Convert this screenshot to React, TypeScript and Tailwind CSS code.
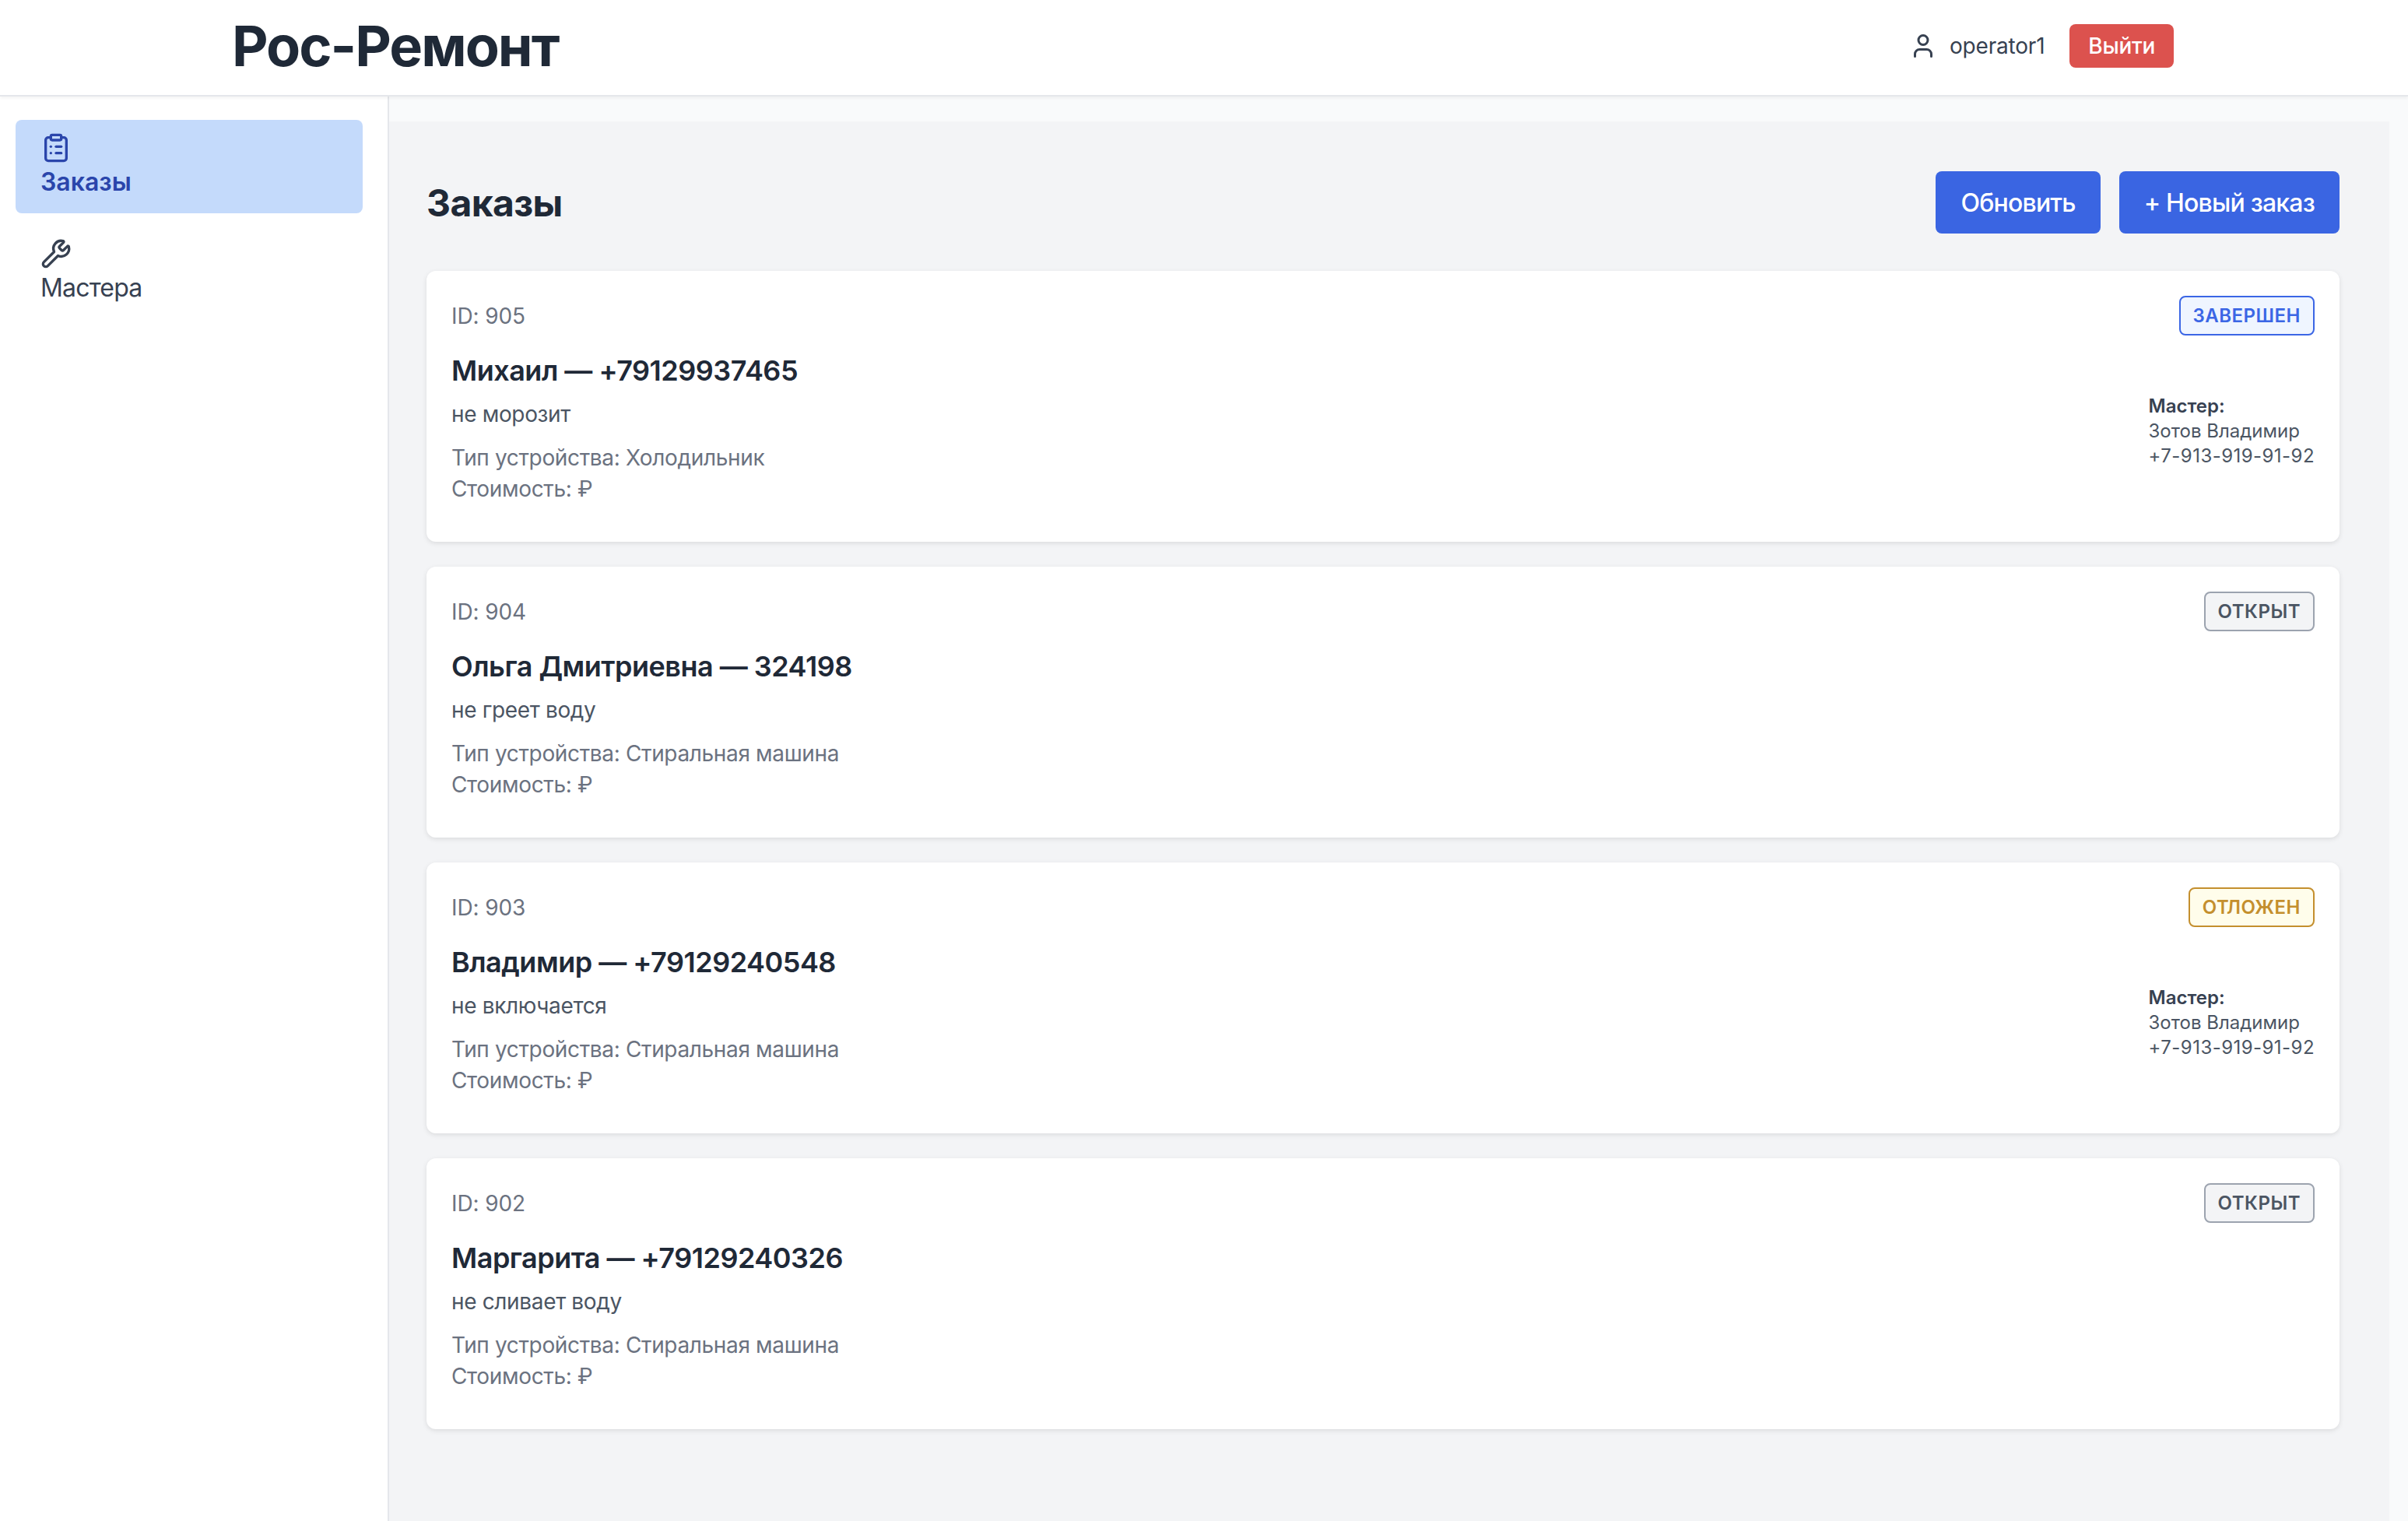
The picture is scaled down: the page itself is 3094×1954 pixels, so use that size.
import { ClipboardList, User, Wrench } from "lucide-react";

type Order = {
  id: number;
  title: string;
  problem: string;
  device: string;
  status: "done" | "open" | "paused";
  master?: boolean;
};

const orders: Order[] = [
  { id: 905, title: "Михаил — +79129937465", problem: "не морозит", device: "Холодильник", status: "done", master: true },
  { id: 904, title: "Ольга Дмитриевна — 324198", problem: "не греет воду", device: "Стиральная машина", status: "open" },
  { id: 903, title: "Владимир — +79129240548", problem: "не включается", device: "Стиральная машина", status: "paused", master: true },
  { id: 902, title: "Маргарита — +79129240326", problem: "не сливает воду", device: "Стиральная машина", status: "open" },
];

function StatusBadge({ status }: { status: Order["status"] }) {
  if (status === "done") {
    return (
      <span className="flex h-[51px] items-center rounded-lg border-2 border-[#3b66e5] bg-[#eff5ff] px-4 pt-px text-[24px] font-semibold tracking-[0.5px] text-[#3b66e5]">
        ЗАВЕРШЕН
      </span>
    );
  }
  if (status === "paused") {
    return (
      <span className="flex h-[51px] items-center rounded-lg border-2 border-[#c48f2e] bg-[#fffdeb] px-4 pt-px text-[24px] font-semibold tracking-[0.5px] text-[#c48f2e]">
        ОТЛОЖЕН
      </span>
    );
  }
  return (
    <span className="flex h-[51px] items-center rounded-lg border-2 border-[#9ca3af] bg-[#f3f4f6] px-4 pt-px text-[24px] font-semibold tracking-[0.5px] text-[#4b5563]">
      ОТКРЫТ
    </span>
  );
}

function OrderCard({ order }: { order: Order }) {
  return (
    <div className="rounded-xl bg-white p-8 shadow-[0_2px_6px_rgba(0,0,0,0.1)]">
      <div className="flex items-center justify-between">
        <span className="pt-px text-[28px] leading-10 tracking-[-0.1px] text-[#6b7280]">ID: {order.id}</span>
        <StatusBadge status={order.status} />
      </div>

      <div className="mt-[17px] flex items-center justify-between">
        <div className="pb-4">
          <h3 className="text-[36px] leading-14 font-semibold tracking-[-0.5px] text-[#1f2937]">{order.title}</h3>
          <p className="mt-2 text-[28px] leading-10 tracking-[-0.35px] text-[#4b5563]">{order.problem}</p>
          <p className="mt-4 text-[28px] leading-10 tracking-[-0.35px] text-[#6b7280]">Тип устройства: {order.device}</p>
          <p className="text-[28px] leading-10 tracking-[-0.35px] text-[#6b7280]">Стоимость: ₽</p>
        </div>
        {order.master && (
          <div className="pb-1 text-[24px] leading-8 text-[#4b5563]">
            <p className="font-semibold text-[#374151]">Мастер:</p>
            <p>Зотов Владимир</p>
            <p className="tracking-[0.45px]">+7-913-919-91-92</p>
          </div>
        )}
      </div>
    </div>
  );
}

export default function App() {
  return (
    <div className="flex h-[1954px] flex-col overflow-hidden bg-[#f9fafb] font-['Inter',sans-serif]">
      {/* Header */}
      <header className="relative z-10 flex h-[124px] shrink-0 items-center justify-between border-b-2 border-[#e5e7eb] bg-white pr-[301px] pb-1 pl-[298px] shadow-[0_2px_4px_rgba(0,0,0,0.05)]">
        <h1 className="text-[72px] leading-none font-bold tracking-[-2px] text-[#1f2937]">Рос-Ремонт</h1>
        <div className="flex items-center">
          <User className="h-9 w-9 text-[#374151]" />
          <span className="ml-4 text-[28px] leading-10 tracking-[-0.2px] text-[#374151]">operator1</span>
          <button className="ml-8 h-14 rounded-lg bg-[#dc524e] px-6 text-[28px] leading-10 font-medium tracking-[-0.3px] text-white">
            Выйти
          </button>
        </div>
      </header>

      <div className="flex min-h-0 flex-1">
        {/* Sidebar */}
        <aside className="flex w-[500px] shrink-0 flex-col gap-4 border-r-2 border-[#e5e7eb] bg-white pt-[30px] pr-[32px] pl-5">
          <a className="rounded-lg bg-[#c4dafb] px-8 py-4 text-[32px] leading-12 font-semibold text-[#2a45ab]">
            <ClipboardList className="h-10 w-10" />
            Заказы
          </a>
          <a className="rounded-lg px-8 py-4 text-[32px] leading-12 tracking-[-0.8px] text-[#374151]">
            <Wrench className="h-10 w-10" />
            Мастера
          </a>
        </aside>

        {/* Main */}
        <main className="min-w-0 flex-1 pt-8 pr-6">
          <div className="h-full bg-[#f3f4f6] pt-16 pr-16 pl-12">
            <div className="flex items-center justify-between">
              <h2 className="pt-[2px] text-[48px] leading-14 font-bold tracking-[-0.6px] text-[#1f2937]">Заказы</h2>
              <div className="flex gap-6">
                <button className="h-20 rounded-lg bg-[#3a65e2] px-8 pt-[2px] text-[32px] font-medium tracking-[-0.8px] text-white">Обновить</button>
                <button className="h-20 rounded-lg bg-[#3a65e2] px-8 pt-[2px] text-[32px] font-medium tracking-[-0.8px] text-white">+ Новый заказ</button>
              </div>
            </div>
            <div className="mt-12 flex flex-col gap-8">
              {orders.map((order) => (
                <OrderCard key={order.id} order={order} />
              ))}
            </div>
          </div>
        </main>
      </div>
    </div>
  );
}
